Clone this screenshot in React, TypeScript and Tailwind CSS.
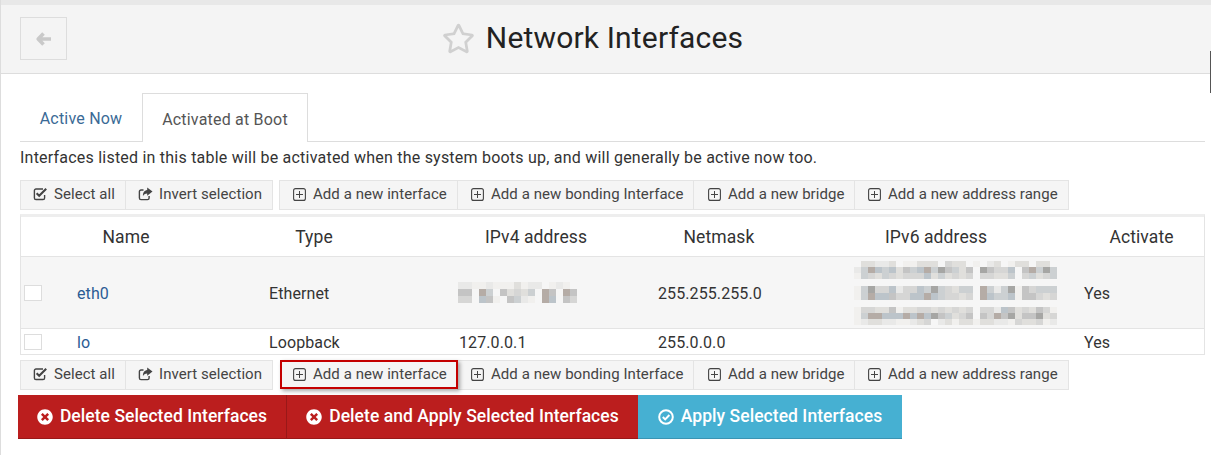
import { FaTimesCircle, FaRegStar } from "react-icons/fa";

const shades = ["none", "#f1f0ee", "#e9e9e8", "#e0dfdc", "#d6d6d5", "#ccd0d2", "#c4c4c4", "#bcc4ca", "#b5aca6", "#a6a6a4"];

const ipv4Lines = [["22112111312201210", "66085063435086086", "44076106521087064"]];

const ipv6Lines = [
  ["03322301133304330102301330330", "25875736578596536" + "0" + "96447" + "0" + "68595", "15435434447353434" + "0" + "44335" + "0" + "45345"],
  ["15944724475954355" + "0" + "85259" + "1" + "64555", "15877644778754434" + "0" + "87557" + "1" + "66434"],
  ["14433613344343434" + "0" + "44276" + "3" + "43641", "15887778787965346" + "0" + "64869" + "3" + "66934", "12332211234023133" + "1" + "33221" + "4" + "33412"],
];

function Mosaic({ lines, cellHeight, gap = 7, className }: { lines: string[][]; cellHeight: number; gap?: number; className: string }) {
  const width = lines[0][0].length * 7;
  const rects: React.ReactNode[] = [];
  let y = 0;

  lines.forEach((line, lineIndex) => {
    const h = line.length === 3 ? cellHeight : 7;
    line.forEach((row, rowIndex) => {
      row.split("").forEach((cell, index) => {
        const shade = shades[Number(cell)];
        if (shade !== "none") {
          rects.push(<rect key={`${lineIndex}-${rowIndex}-${index}`} x={index * 7} y={y} width={7} height={h} fill={shade} />);
        }
      });
      y += h;
    });
    if (lineIndex < lines.length - 1) {
      y += gap;
    }
  });

  return (
    <svg className={className} width={width} height={y} viewBox={`0 0 ${width} ${y}`} aria-hidden="true">
      {rects}
    </svg>
  );
}

function CheckSquareIcon() {
  return (
    <svg width="15" height="14" viewBox="0 0 15 14" className="mr-[6px] shrink-0" aria-hidden="true">
      <path d="M10 2 H3 A1.6 1.6 0 0 0 1.4 3.6 V10.9 A1.6 1.6 0 0 0 3 12.5 H10 A1.6 1.6 0 0 0 11.6 10.9 V8" fill="none" stroke="currentColor" strokeWidth="1.4" />
      <path d="M3.6 6.2 L6.2 8.8 L13.2 1.8" fill="none" stroke="currentColor" strokeWidth="2.1" />
    </svg>
  );
}

function ShareSquareIcon() {
  return (
    <svg width="15" height="14" viewBox="0 0 15 14" className="mr-[6px] shrink-0" aria-hidden="true">
      <path d="M5.5 3 H3 A1.6 1.6 0 0 0 1.4 4.6 V11 A1.6 1.6 0 0 0 3 12.6 H9.5 A1.6 1.6 0 0 0 11.1 11 V9" fill="none" stroke="currentColor" strokeWidth="1.4" />
      <path d="M9.2 0.5 L14.5 4.6 L9.2 8.7 V6.4 C7 6.4 5.6 7.2 5 9.2 C4.6 5.8 6.3 3.2 9.2 2.9 Z" fill="currentColor" />
    </svg>
  );
}

function PlusSquareIcon() {
  return (
    <svg width="13" height="13" viewBox="0 0 13 13" className="mr-[7px] shrink-0" aria-hidden="true">
      <rect x="0.6" y="0.6" width="11.8" height="11.8" rx="2" fill="none" stroke="currentColor" strokeWidth="1.1" />
      <path d="M6.5 3 V10 M3 6.5 H10" fill="none" stroke="currentColor" strokeWidth="1" />
    </svg>
  );
}

function ToolButton({ icon, label, highlighted = false, className = "" }: { icon: "check" | "share" | "plus"; label: string; highlighted?: boolean; className?: string }) {
  return (
    <button
      type="button"
      className={`flex items-center whitespace-nowrap border bg-[#f5f5f5] text-[15px] tracking-[0.06px] text-[#444] ${
        highlighted ? "relative z-10 ml-px h-[29px] border-2 border-[#c40000] shadow-[2px_2px_4px_rgba(0,0,0,0.35)]" : "h-[30px] border-[#e4e4e4] pb-[2px]"
      } ${className}`}
    >
      {icon === "check" && <CheckSquareIcon />}
      {icon === "share" && <ShareSquareIcon />}
      {icon === "plus" && <PlusSquareIcon />}
      {label}
    </button>
  );
}

function ButtonRow({ highlightFirst = false }: { highlightFirst?: boolean }) {
  return (
    <div className="flex">
      <ToolButton icon="check" label="Select all" className="w-[106px] pl-[12px]" />
      <ToolButton icon="share" label="Invert selection" className="-ml-px w-[148px] pl-[12px]" />
      <div className="w-[6px]" />
      <ToolButton
        icon="plus"
        label="Add a new interface"
        highlighted={highlightFirst}
        className={highlightFirst ? "w-[178px] pl-[11px]" : "w-[179px] pl-[13px]"}
      />
      <ToolButton icon="plus" label="Add a new bonding Interface" className="-ml-px w-[237px] pl-[13px]" />
      <ToolButton icon="plus" label="Add a new bridge" className="-ml-px w-[162px] pl-[14px]" />
      <ToolButton icon="plus" label="Add a new address range" className="-ml-px w-[215px] pl-[13px]" />
    </div>
  );
}

const headerCols = "grid h-[40px] grid-cols-[29px_152px_224px_220px_146px_288px_123px] items-center border-b border-[#e4e4e4] pt-px text-center text-[17.5px] tracking-[0.1px] text-[#333]";
const bodyCols = "grid grid-cols-[56px_192px_190px_199px_200px_226px_119px] items-center text-[16px] tracking-[0.1px] text-[#333] [&>a]:pt-[2px] [&>span]:pt-[2px]";

function Checkbox() {
  return <div className="ml-[3px] h-[16px] w-[18px] border border-[#ddd] bg-white" />;
}

export default function App() {
  return (
    <div className="relative h-[455px] overflow-hidden border-l border-[#ddd] bg-white font-['Roboto',sans-serif]">
      <div className="absolute -left-px right-0 top-0 h-[5px] bg-[#e8e8e8]" />
      <div className="absolute right-0 top-[51px] z-10 h-[42px] w-px bg-[#555]" />

      <header className="relative mt-[5px] flex h-[69px] items-center justify-center border-b border-[#ddd] bg-[#f4f4f4] pb-[2px]">
        <button type="button" className="absolute left-[19px] top-[12px] flex h-[43px] w-[47px] items-center justify-center border border-[#ddd] text-[#c9c9c9]">
          <svg width="16" height="14" viewBox="0 0 16 14" aria-hidden="true">
            <path d="M7.5 1.5 L2.2 7 L7.5 12.5 M3 7 H15" fill="none" stroke="currentColor" strokeWidth="3.6" strokeLinejoin="round" />
          </svg>
        </button>
        <div className="mr-[27px] flex items-center">
          <FaRegStar className="mr-[11px] text-[33px] text-[#d0d0d0]" />
          <h1 className="text-[30px] leading-none tracking-[0.17px] text-[#222]">Network Interfaces</h1>
        </div>
      </header>

      <main className="pl-[19px] pr-[6px]">
        <div className="mt-[19px] flex h-[49px] items-end border-b border-[#ddd] text-[16px] tracking-[0.2px]">
          <a href="#active" className="flex h-[48px] w-[122px] items-center justify-center pt-[4px] text-[#3a6a96]">
            Active Now
          </a>
          <a href="#boot" className="relative -mb-px flex h-[49px] w-[166px] items-center justify-center border-x border-t border-[#ddd] bg-white pt-[3px] text-[#555]">
            Activated at Boot
          </a>
        </div>

        <p className="mt-[6px] h-[20px] text-[16px] leading-[20px] tracking-[0.22px] text-[#333]">
          Interfaces listed in this table will be activated when the system boots up, and will generally be active now too.
        </p>

        <div className="mt-[12px]">
          <ButtonRow />
        </div>

        <div className="mt-[4px] border border-t-[3px] border-[#eee] border-b-[#e4e4e4] border-x-[#e4e4e4]">
          <div className={headerCols}>
            <span />
            <span>Name</span>
            <span>Type</span>
            <span>IPv4 address</span>
            <span>Netmask</span>
            <span>IPv6 address</span>
            <span>Activate</span>
          </div>
          <div className={`${bodyCols} h-[72px] border-b border-[#e4e4e4] bg-[#f6f6f6]`}>
            <Checkbox />
            <a href="#eth0" className="text-[#2b5c94]">eth0</a>
            <span>Ethernet</span>
            <Mosaic lines={ipv4Lines} cellHeight={7} className="-ml-px" />
            <span>255.255.255.0</span>
            <Mosaic lines={ipv6Lines} cellHeight={6} className="-ml-[4px]" />
            <span>Yes</span>
          </div>
          <div className={`${bodyCols} h-[25px]`}>
            <Checkbox />
            <a href="#lo" className="text-[#2b5c94]">lo</a>
            <span>Loopback</span>
            <span>127.0.0.1</span>
            <span>255.0.0.0</span>
            <span />
            <span>Yes</span>
          </div>
        </div>

        <div className="mt-[5px]">
          <ButtonRow highlightFirst />
        </div>

        <div className="-ml-[2px] mt-[5px] flex h-[44px] w-[884px] text-[17.5px] font-medium tracking-[0.05px] text-white">
          <button type="button" className="flex w-[268px] items-center justify-center gap-[7px] border-b border-[#991818] bg-[#bb1e1e]">
            <FaTimesCircle className="text-[16px]" />
            Delete Selected Interfaces
          </button>
          <button type="button" className="flex w-[352px] items-center justify-center gap-[7px] border-b border-l border-[#991818] bg-[#bb1e1e]">
            <FaTimesCircle className="text-[16px]" />
            Delete and Apply Selected Interfaces
          </button>
          <button type="button" className="flex w-[264px] items-center justify-center gap-[7px] border-b border-[#3a94b3] bg-[#46b0d2]">
            <svg width="16" height="16" viewBox="0 0 16 16" aria-hidden="true">
              <circle cx="8" cy="8" r="6.8" fill="none" stroke="currentColor" strokeWidth="2" />
              <path d="M4.8 8 L7.2 10.4 L11.4 6" fill="none" stroke="currentColor" strokeWidth="2" />
            </svg>
            Apply Selected Interfaces
          </button>
        </div>
      </main>
    </div>
  );
}
